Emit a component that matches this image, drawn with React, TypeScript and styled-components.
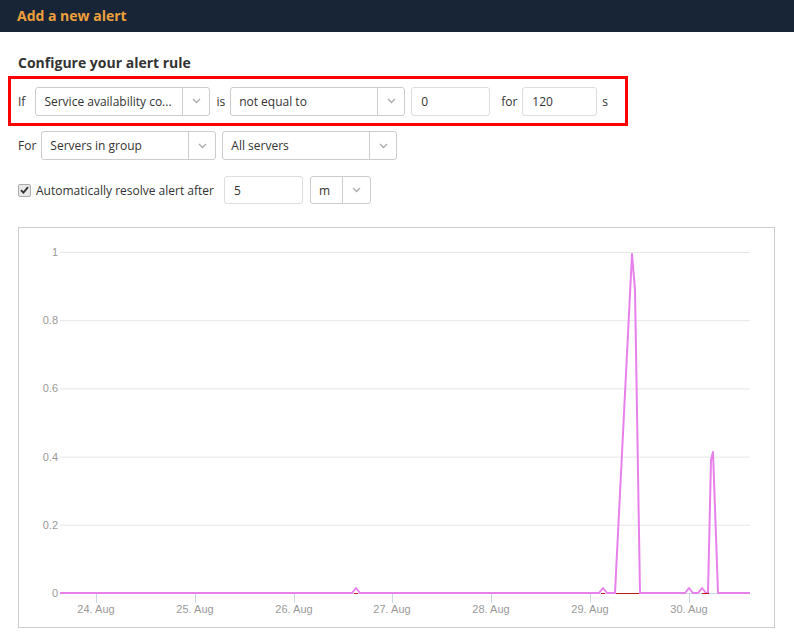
import React from "react";
import styled, { createGlobalStyle } from "styled-components";

const Global = createGlobalStyle`
  html, body { margin: 0; padding: 0; background: #fff; }
  body { font-family: "Open Sans", "Liberation Sans", sans-serif; color: #333; }
  * { box-sizing: border-box; }
`;

const Page = styled.div`
  width: 794px;
  height: 640px;
  overflow: hidden;
`;

const Header = styled.header`
  height: 32px;
  background: #172537;
  display: flex;
  align-items: center;
  padding: 0 0 2px 17px;
`;

const Title = styled.h1`
  margin: 0;
  font-size: 14px;
  font-weight: 700;
  color: #f0a03a;
`;

const Body = styled.div`
  padding: 21px 19px 0 8px;
  display: flex;
  flex-direction: column;
`;

const Heading = styled.h2`
  margin: 0 0 3px 10px;
  font-size: 14px;
  font-weight: 700;
  color: #333;
  line-height: 20px;
`;

const RuleBox = styled.div`
  width: 620px;
  height: 50px;
  border: 3px solid #f00;
  display: flex;
  align-items: center;
  padding: 0 0 0 7px;
`;

const Row = styled.div<{ $mt?: number }>`
  display: flex;
  align-items: center;
  margin-top: ${(p) => p.$mt ?? 0}px;
  padding-left: 10px;
`;

const Label = styled.span<{ $ml?: number; $mr?: number }>`
  font-size: 12px;
  color: #333;
  margin-left: ${(p) => p.$ml ?? 0}px;
  margin-right: ${(p) => p.$mr ?? 0}px;
  white-space: nowrap;
`;

const SelectBox = styled.div<{ $w: number; $h?: number }>`
  width: ${(p) => p.$w}px;
  height: ${(p) => p.$h ?? 29}px;
  border: 1px solid #ccc;
  border-radius: 3px;
  background: #fff;
  display: flex;
  align-items: stretch;
  font-size: 12px;
  color: #333;
`;

const SelectText = styled.div`
  flex: 1;
  display: flex;
  align-items: center;
  padding-left: 8px;
  white-space: nowrap;
  overflow: hidden;
`;

const Chevron = styled.div<{ $w?: number }>`
  width: ${(p) => p.$w ?? 27}px;
  border-left: 1px solid #ccc;
  display: flex;
  align-items: center;
  justify-content: center;
`;

const TextInput = styled.div<{ $w: number; $h?: number }>`
  width: ${(p) => p.$w}px;
  height: ${(p) => p.$h ?? 29}px;
  border: 1px solid #ddd;
  border-radius: 3px;
  display: flex;
  align-items: center;
  padding-left: 9px;
  font-size: 12px;
  color: #333;
`;

const CheckBox = styled.span`
  width: 13px;
  height: 13px;
  border: 1px solid #aaa;
  border-radius: 2px;
  background: #e8e8e8;
  display: inline-flex;
  align-items: center;
  justify-content: center;
  margin-right: 5px;
`;

const ChartBox = styled.div`
  margin: 23px 0 0 10px;
  width: 757px;
  height: 401px;
  border: 1px solid #ccc;
`;

const ChevronIcon = () => (
  <svg width="9" height="6" viewBox="0 0 9 6">
    <path d="M1 1 L4.5 4.5 L8 1" fill="none" stroke="#aaa" strokeWidth="1.3" />
  </svg>
);

const Select = ({ w, text, cw, h }: { w: number; text: string; cw?: number; h?: number }) => (
  <SelectBox $w={w} $h={h}>
    <SelectText>{text}</SelectText>
    <Chevron $w={cw}>
      <ChevronIcon />
    </Chevron>
  </SelectBox>
);

const yTicks = [
  { v: "1", y: 24 },
  { v: "0.8", y: 92.2 },
  { v: "0.6", y: 160.4 },
  { v: "0.4", y: 228.6 },
  { v: "0.2", y: 296.8 },
  { v: "0", y: 365 },
];

const xTicks = [
  { l: "24. Aug", x: 77 },
  { l: "25. Aug", x: 176 },
  { l: "26. Aug", x: 275 },
  { l: "27. Aug", x: 373 },
  { l: "28. Aug", x: 472 },
  { l: "29. Aug", x: 571 },
  { l: "30. Aug", x: 670 },
];

const seriesPoints = [
  [41, 365],
  [333, 365], [337, 360], [341, 365],
  [580, 365], [584, 360], [588, 365],
  [596, 365], [613, 26], [616, 62], [621, 365],
  [666, 365], [670, 360], [674, 365],
  [679, 365], [683, 360], [687, 365],
  [689, 365], [692, 232], [694, 224], [699, 365],
  [731, 365],
];

const Chart = () => (
  <svg width="755" height="399" viewBox="0 0 755 399" style={{ display: "block" }}>
    {yTicks.map((t) => (
      <g key={t.v}>
        {t.v !== "0" && (
          <line x1="41" x2="731" y1={t.y + 0.5} y2={t.y + 0.5} stroke="#e6e6e6" strokeWidth="1" />
        )}
        <text
          x="39"
          y={t.y + 4}
          textAnchor="end"
          fontFamily="Liberation Sans, Arial, sans-serif"
          fontSize="11"
          fill="#999"
        >
          {t.v}
        </text>
      </g>
    ))}
    {xTicks.map((t) => (
      <g key={t.l}>
        <line x1={t.x + 0.5} x2={t.x + 0.5} y1="365" y2="375" stroke="#ccd6eb" strokeWidth="1" />
        <text
          x={t.x}
          y="385"
          textAnchor="middle"
          fontFamily="Liberation Sans, Arial, sans-serif"
          fontSize="11"
          fill="#999"
        >
          {t.l}
        </text>
      </g>
    ))}
    <line x1="41" x2="731" y1="365.5" y2="365.5" stroke="#ccd6eb" strokeWidth="1" />
    <polyline
      points={seriesPoints.map((p) => p.join(",")).join(" ")}
      fill="none"
      stroke="#e880ec"
      strokeWidth="2"
      strokeLinejoin="round"
    />
    <line x1="597" x2="620" y1="365.5" y2="365.5" stroke="#c01818" strokeWidth="1" />
    <line x1="683" x2="690" y1="365.5" y2="365.5" stroke="#c01818" strokeWidth="1" />
    <line x1="335" x2="339" y1="365.5" y2="365.5" stroke="#c01818" strokeWidth="1" />
    <line x1="582" x2="586" y1="365.5" y2="365.5" stroke="#c01818" strokeWidth="1" />
  </svg>
);

export default function App() {
  return (
    <Page>
      <Global />
      <Header>
        <Title>Add a new alert</Title>
      </Header>
      <Body>
        <Heading>Configure your alert rule</Heading>
        <RuleBox>
          <Label $mr={10}>If</Label>
          <Select w={175} text="Service availability co..." />
          <Label $ml={6} $mr={5}>is</Label>
          <Select w={175} text="not equal to" />
          <Label $mr={6} />
          <TextInput $w={79}>0</TextInput>
          <Label $ml={11} $mr={5}>for</Label>
          <TextInput $w={75}>120</TextInput>
          <Label $ml={5}>s</Label>
        </RuleBox>
        <Row $mt={5}>
          <Label $mr={5}>For</Label>
          <Select w={175} text="Servers in group" />
          <Label $mr={6} />
          <Select w={175} text="All servers" />
        </Row>
        <Row $mt={16}>
          <CheckBox>
            <svg width="9" height="8" viewBox="0 0 9 8">
              <path d="M1 4.2 L3.4 6.6 L8 1.2" fill="none" stroke="#333" strokeWidth="1.8" />
            </svg>
          </CheckBox>
          <Label $mr={10}>Automatically resolve alert after</Label>
          <TextInput $w={79} $h={28}>5</TextInput>
          <Label $mr={7} />
          <Select w={61} h={28} cw={28} text="m" />
        </Row>
        <ChartBox>
          <Chart />
        </ChartBox>
      </Body>
    </Page>
  );
}
